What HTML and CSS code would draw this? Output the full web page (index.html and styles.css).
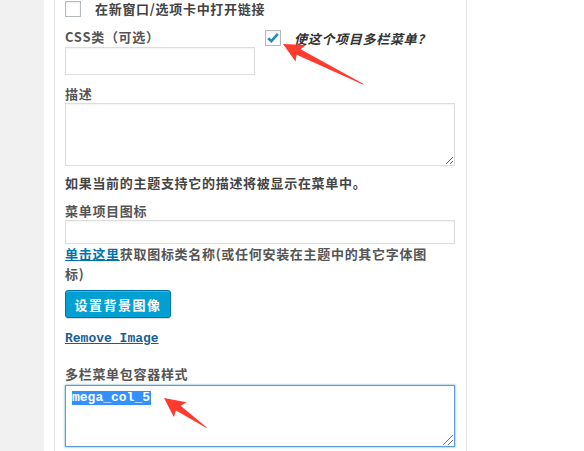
FILE: index.html
```html
<!DOCTYPE html>
<html lang="zh-CN">
<head>
  <meta charset="UTF-8">
  <title>菜单项设置</title>
  <link rel="stylesheet" href="styles.css">
</head>
<body>
  <div class="sidebar"></div>
  <div class="main">
    <div class="menu-item">
      <label class="check-row">
        <span class="checkbox"></span>
        <span class="check-text">在新窗口/选项卡中打开链接</span>
      </label>

      <div class="css-row">
        <div class="css-col">
          <div class="label">CSS类（可选）</div>
          <div class="input input-css"></div>
        </div>
        <label class="mega-check">
          <span class="checkbox checked">
            <svg width="14" height="14" viewBox="0 0 14 14"><path d="M2.2 7.2 L5.4 10.2 L11.8 2.8" fill="none" stroke="#1e8cbe" stroke-width="2.6"/></svg>
          </span>
          <span class="mega-text">使这个项目多栏菜单？</span>
        </label>
      </div>

      <div class="label label-desc">描述</div>
      <textarea class="textarea ta-desc"></textarea>
      <p class="note">如果当前的主题支持它的描述将被显示在菜单中。</p>

      <div class="label label-icon">菜单项目图标</div>
      <div class="input input-icon"></div>
      <p class="icon-help"><a href="#" class="link">单击这里</a>获取图标类名称(或任何安装在主题中的其它字体图<br>标)</p>

      <button class="btn">设置背景图像</button>

      <a href="#" class="remove">Remove Image</a>

      <div class="label label-wrap">多栏菜单包容器样式</div>
      <div class="textarea ta-focus"><span class="selected">mega_col_5</span><span class="grip"></span></div>
    </div>
  </div>

  <!-- 标注箭头 -->
  <svg class="arrows" width="584" height="451">
    <g transform="translate(283 44) rotate(26.6)">
      <polygon points="0,0 21,-9.5 18,-3.2 90,-0.4 90,0.4 17,3.4 19,10" fill="#ff3b30"/>
    </g>
    <g transform="translate(164 398) rotate(34.9)">
      <polygon points="0,0 21,-9.5 18,-3.2 52,-0.4 52,0.4 17,3.4 19,10" fill="#ff3b30"/>
    </g>
  </svg>
</body>
</html>
```

FILE: styles.css
```css
body {
  margin: 0;
  height: 451px;
  display: flex;
  background: #fff;
  font-family: "Noto Sans CJK SC", "Liberation Sans", sans-serif;
  font-size: 13px;
  color: #555;
  overflow: hidden;
  position: relative;
}
.sidebar {
  width: 44px;
  background: #f1f1f1;
}
.main {
  padding-left: 10px;
}
.menu-item {
  width: 390px;
  height: 451px;
  padding: 0 11px 0 10px;
  border-left: 1px solid #e5e5e5;
  border-right: 1px solid #e5e5e5;
}
.check-row {
  display: flex;
  align-items: center;
  height: 17px;
}
.checkbox {
  display: inline-flex;
  align-items: center;
  justify-content: center;
  width: 14px;
  height: 14px;
  border: 1px solid #b4b9be;
  background: #fff;
  box-shadow: inset 0 1px 2px rgba(0,0,0,0.08);
}
.check-text {
  margin-left: 14px;
  font-weight: bold;
  color: #444;
  letter-spacing: 0.7px;
}
.css-row {
  display: flex;
  margin-top: 11px;
}
.css-col {
  width: 190px;
}
.label {
  line-height: 18px;
  font-weight: bold;
  letter-spacing: 0.7px;
}
.input {
  box-sizing: border-box;
  border: 1px solid #ddd;
  background: #fff;
  box-shadow: inset 0 1px 2px rgba(0,0,0,0.05);
}
.input-css {
  margin-top: 1px;
  height: 28px;
}
.mega-check {
  display: flex;
  align-items: center;
  margin-left: 10px;
  margin-top: 2px;
  height: 16px;
}
.mega-text {
  margin-left: 13px;
  font-weight: bold;
  font-style: italic;
  color: #333;
  letter-spacing: 0.7px;
}
.label-desc {
  margin-top: 10px;
}
.textarea {
  display: block;
  box-sizing: border-box;
  width: 390px;
  margin: 0;
  border: 1px solid #ddd;
  background: #fff;
  box-shadow: inset 0 1px 2px rgba(0,0,0,0.05);
  font-family: "Liberation Mono", monospace;
}
.ta-desc {
  height: 63px;
}
.note {
  margin: 8px 0 0;
  line-height: 18px;
  font-weight: bold;
  color: #444;
  letter-spacing: 0.7px;
}
.label-icon {
  margin-top: 10px;
}
.input-icon {
  height: 24px;
}
.icon-help {
  margin: 0;
  line-height: 20px;
  font-weight: bold;
  color: #555;
  letter-spacing: 0.7px;
}
.link {
  color: #0073aa;
}
.btn {
  display: block;
  margin-top: 6px;
  width: 106px;
  height: 28px;
  padding: 0;
  border: 1px solid #0073aa;
  border-radius: 3px;
  background: #00a0d2;
  box-shadow: inset 0 1px 0 rgba(120,200,230,0.5), 0 1px 0 rgba(0,0,0,0.15);
  color: #fff;
  font-family: inherit;
  font-size: 13px;
  font-weight: bold;
  letter-spacing: 1.5px;
}
.remove {
  display: block;
  width: max-content;
  margin-top: 12px;
  line-height: 18px;
  font-family: "Liberation Mono", monospace;
  font-weight: bold;
  color: #1a5f94;
}
.label-wrap {
  margin-top: 17px;
}
.ta-focus {
  position: relative;
  margin-top: 2px;
  height: 62px;
  padding: 4px 0 0 6px;
  border-color: #5b9dd9;
  box-shadow: 0 0 2px rgba(30,140,190,0.8);
}
.selected {
  background: #3390ff;
  color: #fff;
  font-weight: bold;
  font-size: 13px;
  line-height: 14px;
  display: inline-block;
  padding-right: 1px;
}
.grip {
  position: absolute;
  right: 1px;
  bottom: 1px;
  width: 10px;
  height: 10px;
  background: linear-gradient(135deg, transparent 45%, #777 46%, #777 52%, transparent 53%, transparent 70%, #777 71%, #777 77%, transparent 78%);
}
.arrows {
  position: absolute;
  left: 0;
  top: 0;
  pointer-events: none;
}
```
